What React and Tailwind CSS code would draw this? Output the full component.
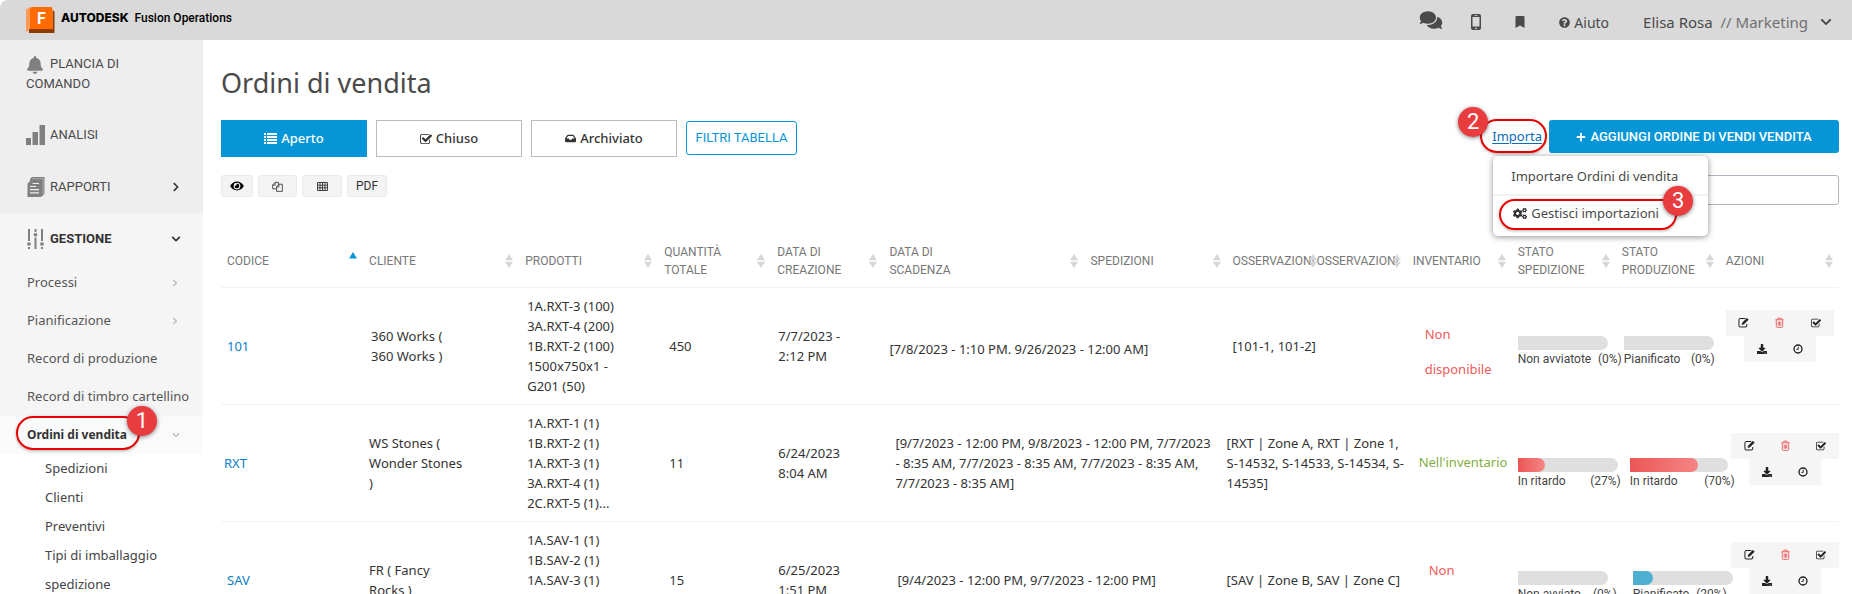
import React from "react";
import {
  FaComments,
  FaBookmark,
  FaQuestionCircle,
  FaBell,
  FaInbox,
  FaEye,
  FaPlus,
  FaCogs,
  FaDownload,
  FaChevronDown,
  FaChevronRight,
} from "react-icons/fa";

/* ---------- Icons ---------- */

const CHECK_PATH =
  "M1408 930v318q0 119-84.5 203.5t-203.5 84.5h-832q-119 0-203.5-84.5t-84.5-203.5v-832q0-119 84.5-203.5t203.5-84.5h832q63 0 117 25 15 7 18 23 3 17-9 29l-49 49q-10 10-23 10-3 0-9-2-23-6-45-6h-832q-66 0-113 47t-47 113v832q0 66 47 113t113 47h832q66 0 113-47t47-113v-254q0-13 9-22l64-64q10-10 23-10 6 0 12 3 20 8 20 29zm231-489l-814 814q-24 24-57 24t-57-24l-430-430q-24-24-24-57t24-57l110-110q24-24 57-24t57 24l263 263 647-647q24-24 57-24t57 24l110 110q24 24 24 57t-24 57z";

function CheckIcon({ className }) {
  return (
    <svg viewBox="0 0 1664 1664" fill="currentColor" className={className} aria-hidden="true">
      <path d={CHECK_PATH} />
    </svg>
  );
}

function EditIcon({ className }) {
  return (
    <svg viewBox="0 0 12 12" fill="none" stroke="currentColor" className={className} aria-hidden="true">
      <path d="M8 1.7H2.6A1.6 1.6 0 0 0 1 3.300V9.200a1.600 1.600 0 0 0 1.600 1.600H8A1.600 1.600 0 0 0 9.600 9.200V7.600" strokeWidth="1.100" />
      <path d="M9.700 1.200l1.700 1.700-5 5-2.200.5.5-2.200z" fill="currentColor" strokeWidth=".3" />
    </svg>
  );
}

function TrashIcon({ className }) {
  return (
    <svg viewBox="0 0 12 12" fill="none" stroke="currentColor" className={className} aria-hidden="true">
      <path d="M1.500 3h9M4.200 3V1.200h3.600V3M2.500 3v7.300c0 .6.4 1.100 1 1.100h5c.6 0 1-.5 1-1.100V3M4.600 5v4.500M6 5v4.500M7.400 5v4.500" strokeWidth=".9" />
    </svg>
  );
}

function ClockIcon({ className }) {
  return (
    <svg viewBox="0 0 12 12" fill="none" stroke="currentColor" className={className} aria-hidden="true">
      <circle cx="6" cy="6" r="4.800" strokeWidth="1.600" />
      <path d="M6.300 3.200V6.500H4" strokeWidth="1.100" />
    </svg>
  );
}

function ListIcon({ className }) {
  return (
    <svg viewBox="0 0 13 11" fill="currentColor" className={className} aria-hidden="true">
      <path d="M0 0h2v2H0zM3 0h10v2H3zM0 3h2v2H0zM3 3h10v2H3zM0 6h2v2H0zM3 6h10v2H3zM0 9h2v2H0zM3 9h10v2H3z" />
    </svg>
  );
}

function CopyIcon({ className }) {
  return (
    <svg viewBox="0 0 12 12" fill="none" stroke="currentColor" className={className} aria-hidden="true">
      <path d="M4.500 8.500H.7V4.300L3.500 1.500H7v2M3.500 1.500v3H.7M5 6l2.500-2.500h3.800v7.800H5zM7.500 3.500v3H5" strokeWidth=".9" />
    </svg>
  );
}

function GridIcon({ className }) {
  return (
    <svg viewBox="0 0 11 9" fill="none" stroke="currentColor" className={className} aria-hidden="true">
      <path d="M.5.5h10v8H.5zM.5 3.200h10M.5 5.800h10M3 .5v8M5.500.5v8M8 .5v8" strokeWidth=".9" />
    </svg>
  );
}

function MobileIcon({ className }) {
  return (
    <svg viewBox="0 0 10 16" className={className} aria-hidden="true">
      <path fill="currentColor" fillRule="evenodd" d="M2 0h6a2 2 0 0 1 2 2v12a2 2 0 0 1-2 2H2a2 2 0 0 1-2-2V2a2 2 0 0 1 2-2zM1.500 3v9.500h7V3zM5 13.400a.9.9 0 1 0 0 1.800.9.9 0 0 0 0-1.800zM3.500 1.200v.7h3v-.7z" />
    </svg>
  );
}

function BarsIcon({ className }) {
  return (
    <svg viewBox="0 0 19 20" fill="currentColor" className={className} aria-hidden="true">
      <path d="M0 13h5v7H0zM6.500 7h5.500v13H6.500zM13.500 0H19v20h-5.500z" />
    </svg>
  );
}

function ReportIcon({ className }) {
  return (
    <svg viewBox="0 0 18 20" className={className} aria-hidden="true">
      <path fill="currentColor" d="M5 0h12.500v17.500H16V19h-1.500v1H.500V6.500L3 4V2z" />
      <path stroke="#eee" strokeWidth=".4" fill="none" d="M16.200 17.500V1.700H5" />
      <path stroke="#eee" strokeWidth="1.200" fill="none" d="M3 9.500h6M3 12.700h9M3 15.900h9M5.500 6.500h6.500" />
    </svg>
  );
}

function SlidersIcon({ className }) {
  return (
    <svg viewBox="0 0 17 20" fill="none" stroke="currentColor" className={className} aria-hidden="true">
      <path strokeWidth="2" d="M2 0v12M2 18v2M8.500 0v3M8.500 8.500V20M15 0v12M15 18v2" />
      <path strokeWidth="3" d="M.3 15h3.400M6.800 5.700h3.400M13.300 15h3.400" />
    </svg>
  );
}

function Logo() {
  return (
    <svg viewBox="0 0 29 26" className="h-[26px] w-[29px] shrink-0" aria-hidden="true">
      <path d="M0 2.500L4 0v22.500L0 25z" fill="#ff9a55" />
      <path d="M3 22h23.500V3l2 1.500V26H3z" fill="#8f3a00" />
      <path d="M4 2a2 2 0 0 1 2-2h18.500a2 2 0 0 1 2 2v20H4z" fill="#ff6b00" />
      <text x="11" y="16.500" fill="#fff" fontSize="16" fontWeight="700" fontFamily="Roboto, sans-serif">F</text>
    </svg>
  );
}

function SortIcon({ active, tight }) {
  if (active) {
    return (
      <svg viewBox="0 0 8 14" className="h-[14px] w-2 shrink-0 self-start" aria-hidden="true">
        <path d="M4 0l4 6.500H0z" fill="#0696d7" />
      </svg>
    );
  }
  return (
    <svg viewBox="0 0 8 14" className={"h-[14px] w-2 shrink-0 " + (tight ? "-ml-1.5" : "")} aria-hidden="true">
      <path d="M4 0l4 6.200H0zM4 14L0 7.800h8z" fill="#d6d6d6" />
    </svg>
  );
}

function Badge({ n, className }) {
  return (
    <span
      className={
        "absolute flex size-[30px] items-center justify-center rounded-full bg-[#e93c3f] font-[Roboto,sans-serif] text-[22px] leading-none text-white shadow-[0_1px_4px_rgba(0,0,0,0.5)] " +
        className
      }
    >
      {n}
    </span>
  );
}

/* ---------- Top bar ---------- */

function TopBar() {
  return (
    <header className="flex h-10 shrink-0 items-center rounded-tl-lg bg-[#d9d9d9] pr-5 pl-[26px] text-[#4a4a4a]">
      <Logo />
      <p className="ml-1.5 pb-1 font-[Roboto,sans-serif] text-[12px] text-black">
        <span className="font-[Inter,sans-serif] font-extrabold">AUTODESK</span>
        <span className="ml-1.5 font-medium">Fusion Operations</span>
      </p>
      <nav className="ml-auto flex items-center pt-1">
        <button type="button" aria-label="Messaggi" className="mr-7 pb-1">
          <FaComments className="h-5 w-6" />
        </button>
        <button type="button" aria-label="Dispositivo mobile" className="mr-[34px]">
          <MobileIcon className="h-4 w-[10px]" />
        </button>
        <button type="button" aria-label="Segnalibri" className="mr-[34px]">
          <FaBookmark className="h-3 w-[10px]" />
        </button>
        <a href="#aiuto" className="mr-[34px] flex items-center gap-1 text-[14px]">
          <FaQuestionCircle className="size-[11px]" />
          Aiuto
        </a>
        <button type="button" className="flex items-center gap-3 text-[15px]">
          <span>
            Elisa Rosa&nbsp; <span className="text-[#707070]">// Marketing</span>
          </span>
          <FaChevronDown className="size-3" />
        </button>
      </nav>
    </header>
  );
}

/* ---------- Sidebar ---------- */

function SideLink({ children, icon }) {
  return (
    <a href="#voce" className="flex h-[38px] items-center justify-between pr-6 pl-[27px] text-[13px] whitespace-nowrap text-[#555]">
      {children}
      {icon && <FaChevronRight className="size-2 text-[#b5b5b5]" />}
    </a>
  );
}

function Sidebar() {
  return (
    <aside className="w-[203px] shrink-0 text-[#4a4a4a]">
      <div className="h-[173px] bg-[#eee] pt-[14px] font-[Roboto,sans-serif] text-[13px]">
        <a href="#plancia" className="block pr-16 pl-[26px] leading-5">
          <FaBell className="mr-1.5 inline h-[18px] w-[18px] text-[#808080]" />
          PLANCIA DI COMANDO
        </a>
        <a href="#analisi" className="mt-[27px] flex items-center gap-[5px] pt-1 pl-[26px]">
          <BarsIcon className="h-5 w-[19px] text-[#808080]" />
          ANALISI
        </a>
        <a href="#rapporti" className="mt-8 flex items-center gap-[5px] pr-[22px] pl-[27px]">
          <ReportIcon className="h-5 w-[18px] text-[#808080]" />
          RAPPORTI
          <FaChevronRight className="ml-auto size-[10px] text-[#333]" />
        </a>
      </div>
      <div className="bg-[#f5f5f5]">
        <a href="#gestione" className="flex h-[51px] items-center gap-1.5 pr-[22px] pl-[27px] font-[Roboto,sans-serif] text-[13px] font-bold text-[#333]">
          <SlidersIcon className="h-5 w-[17px] text-[#808080]" />
          GESTIONE
          <FaChevronDown className="ml-auto size-[10px]" />
        </a>
        <SideLink icon>Processi</SideLink>
        <SideLink icon>Pianificazione</SideLink>
        <SideLink>Record di produzione</SideLink>
        <SideLink>Record di timbro cartellino</SideLink>
      </div>
      <div className="relative bg-[#fafafa]">
        <a href="#ordini" className="flex h-[38px] items-center justify-between pr-[23px] pl-[27px] text-[12px] font-bold text-[#333]">
          Ordini di vendita
          <FaChevronDown className="size-2 text-[#b5b5b5]" />
        </a>
        <span className="absolute top-0 left-4 h-[34px] w-[124px] rounded-full border-2 border-[#e80000] shadow-[0_1px_3px_rgba(0,0,0,0.3)]" />
        <Badge n="1" className="-top-2.5 left-[127px]" />
      </div>
      <ul className="pl-[45px] text-[13px] leading-[29px] text-[#444]">
        <li><a href="#spedizioni">Spedizioni</a></li>
        <li><a href="#clienti">Clienti</a></li>
        <li><a href="#preventivi">Preventivi</a></li>
        <li><a href="#imballaggio">Tipi di imballaggio<br />spedizione</a></li>
      </ul>
    </aside>
  );
}

/* ---------- Toolbar ---------- */

const TAB = "flex h-[37px] w-[146px] items-center justify-center gap-1 border text-[13px] font-medium";
const TOOL = "flex h-[22px] items-center justify-center rounded-[3px] border border-[#eaeaea] bg-[#f3f3f3] font-[Roboto,sans-serif] text-[12px] text-[#333]";

function Toolbar() {
  return (
    <div className="flex items-start justify-between">
      <div>
        <div className="flex gap-[9px]">
          <button type="button" className={TAB + " border-[#0696d7] bg-[#0696d7] text-white"}>
            <ListIcon className="h-[11px] w-[13px]" />
            Aperto
          </button>
          <button type="button" className={TAB + " border-[#bbb] text-[#333]"}>
            <CheckIcon className="size-3" />
            Chiuso
          </button>
          <button type="button" className={TAB + " border-[#bbb] text-[#333]"}>
            <FaInbox className="size-[11px]" />
            Archiviato
          </button>
          <button type="button" className="mt-px h-[34px] w-[111px] rounded-[3px] border border-[#0696d7] font-[Roboto,sans-serif] text-[13px] text-[#0696d7]">
            FILTRI TABELLA
          </button>
        </div>
        <div className="mt-[18px] flex gap-[5px]">
          <button type="button" aria-label="Mostra colonne" className={TOOL + " w-8"}>
            <FaEye className="h-3 w-[14px] text-black" />
          </button>
          <button type="button" aria-label="Copia" className={TOOL + " w-[39px]"}>
            <CopyIcon className="size-[11px]" />
          </button>
          <button type="button" aria-label="Esporta tabella" className={TOOL + " w-10"}>
            <GridIcon className="h-[9px] w-[11px]" />
          </button>
          <button type="button" className={TOOL + " w-10"}>PDF</button>
        </div>
      </div>
      <div>
        <div className="flex items-center justify-end">
          <div className="relative mr-[7px] pb-1">
            <a href="#importa" className="text-[13px] text-[#0b6cb5] underline underline-offset-2">Importa</a>
            <span className="absolute -top-1 -left-3 h-[34px] w-[67px] rounded-full border-2 border-[#e80000] shadow-[0_1px_3px_rgba(0,0,0,0.3)]" />
            <Badge n="2" className="-top-4 -left-[34px]" />
            <div className="absolute top-[33px] left-px z-10 w-[215px] rounded-[5px] bg-white text-[13px] whitespace-nowrap text-[#4a4a4a] shadow-[0_1px_6px_rgba(0,0,0,0.45)]">
              <a href="#importare" className="flex h-10 items-center border-b-2 border-[#f3f3f3] pt-1 pl-[18px]">
                Importare Ordini di vendita
              </a>
              <a href="#gestisci" className="flex h-10 items-center gap-1 pb-1 pl-5">
                <FaCogs className="h-[13px] w-[14px] text-[#333]" />
                Gestisci importazioni
              </a>
              <span className="absolute top-[43px] left-1.5 h-[31px] w-[178px] rounded-full border-2 border-[#e80000] shadow-[0_1px_3px_rgba(0,0,0,0.3)]" />
              <Badge n="3" className="top-[30px] left-[170px]" />
            </div>
          </div>
          <button type="button" className="flex h-[33px] w-[290px] items-center justify-center gap-1 rounded-[3px] bg-[#0696d7] font-[Roboto,sans-serif] text-[13px] font-medium text-white">
            <FaPlus className="size-[10px]" />
            AGGIUNGI ORDINE DI VENDI VENDITA
          </button>
        </div>
        <div className="mt-[22px] flex justify-end">
          <input type="search" aria-label="Cerca" className="h-[30px] w-60 rounded-[3px] border border-[#b4b4c0] bg-white px-2 text-[13px]" />
        </div>
      </div>
    </div>
  );
}

/* ---------- Table ---------- */

const COLUMNS = [
  { label: ["CODICE"], width: 142, active: true },
  { label: ["CLIENTE"], width: 156 },
  { label: ["PRODOTTI"], width: 139 },
  { label: ["QUANTITÀ", "TOTALE"], width: 113 },
  { label: ["DATA DI", "CREAZIONE"], width: 112 },
  { label: ["DATA DI", "SCADENZA"], width: 201 },
  { label: ["SPEDIZIONI"], width: 142 },
  { label: ["OSSERVAZIONI"], width: 87, tight: true, pad: "pl-1.5" },
  { label: ["OSSERVAZIONI"], width: 93, tight: true, pad: "pl-[3px] pr-1.5" },
  { label: ["INVENTARIO"], width: 105 },
  { label: ["STATO", "SPEDIZIONE"], width: 104 },
  { label: ["STATO", "PRODUZIONE"], width: 104 },
  { label: ["AZIONI"], width: 119 },
];
const TOTAL = COLUMNS.reduce((sum, c) => sum + c.width, 0);

const ROWS = [
  {
    code: "101",
    codePad: "pl-1.5",
    client: ["360 Works (", "360 Works )"],
    clientPad: "pl-2",
    products: ["1A.RXT-3 (100)", "3A.RXT-4 (200)", "1B.RXT-2 (100)", "1500x750x1 -", "G201 (50)"],
    qty: "450",
    created: ["7/7/2023 -", "2:12 PM"],
    due: ["[7/8/2023 - 1:10 PM. 9/26/2023 - 12:00 AM]"],
    duePad: "pl-1.5 pt-1.5",
    notes: ["[101-1, 101-2]"],
    notesPad: "pl-1.5",
    stock: ["Non", "disponibile"],
    stockClass: "pt-3 pl-[18px] text-[#ee5a5a]",
    ship: { label: "Non avviatote", pct: 0, bar: "w-[90px]", box: "w-[104px]", fill: "" },
    make: { label: "Pianificato", pct: 0, bar: "w-[90px]", box: "w-[91px]", fill: "" },
    barPad: "pt-12",
    makePad: "pl-2",
    actions: "items-start pt-[22px] pl-1.5",
  },
  {
    code: "RXT",
    codePad: "pl-[3px]",
    client: ["WS Stones (", "Wonder Stones", ")"],
    clientPad: "pl-1.5",
    products: ["1A.RXT-1 (1)", "1B.RXT-2 (1)", "1A.RXT-3 (1)", "3A.RXT-4 (1)", "2C.RXT-5 (1)..."],
    qty: "11",
    created: ["6/24/2023", "8:04 AM"],
    due: [
      "[9/7/2023 - 12:00 PM, 9/8/2023 - 12:00 PM, 7/7/2023",
      "- 8:35 AM, 7/7/2023 - 8:35 AM, 7/7/2023 - 8:35 AM,",
      "7/7/2023 - 8:35 AM]",
    ],
    duePad: "pl-3",
    notes: ["[RXT | Zone A, RXT | Zone 1,", "S-14532, S-14533, S-14534, S-", "14535]"],
    notesPad: "pl-0",
    stock: ["Nell'inventario"],
    stockClass: "pl-3 text-[#7fae45]",
    ship: { label: "In ritardo", pct: 27, bar: "w-[100px]", box: "w-[103px]", fill: "bg-linear-to-r from-[#ec5555] to-[#f48585]" },
    make: { label: "In ritardo", pct: 70, bar: "w-[98px]", box: "w-[105px]", fill: "bg-linear-to-r from-[#ec5555] to-[#f48585]" },
    barPad: "pt-[53px]",
    makePad: "pl-3.5",
    actions: "items-end pt-7",
  },
  {
    code: "SAV",
    codePad: "pl-1.5",
    client: ["FR ( Fancy", "Rocks )"],
    clientPad: "pl-1.5",
    products: ["1A.SAV-1 (1)", "1B.SAV-2 (1)", "1A.SAV-3 (1)", "3A.SAV-4 (1)", "2C.SAV-5 (1)..."],
    qty: "15",
    created: ["6/25/2023", "1:51 PM"],
    due: ["[9/4/2023 - 12:00 PM, 9/7/2023 - 12:00 PM]"],
    duePad: "pl-3.5",
    notes: ["[SAV | Zone B, SAV | Zone C]"],
    notesPad: "pl-0",
    stock: ["Non", "disponibile"],
    stockClass: "pt-4 pl-[22px] text-[#ee5a5a]",
    ship: { label: "Non avviato", pct: 0, bar: "w-[90px]", box: "w-[99px]", fill: "" },
    make: { label: "Pianificato", pct: 20, bar: "w-[100px]", box: "w-[94px]", fill: "bg-[#4db0d0]" },
    barPad: "pt-[49px]",
    makePad: "pl-[17px]",
    actions: "items-end pt-5",
  },
];

function Lines({ items }) {
  return items.map((line, i) => (
    <span key={i} className="block whitespace-nowrap">
      {line}
    </span>
  ));
}

function Progress({ label, pct, bar, box, fill }) {
  return (
    <div className="font-[Roboto,sans-serif] text-[12px] leading-[18px] whitespace-nowrap text-[#444]">
      <div className={"h-[14px] overflow-hidden rounded-r-full bg-[#dfdfdf] " + bar}>
        <div className={"h-full rounded-r-full " + fill} style={{ width: pct + "%" }} />
      </div>
      <div className={"flex justify-between " + box}>
        <span>{label}</span>
        <span>({pct}%)</span>
      </div>
    </div>
  );
}

function Actions({ className }) {
  const cell = "flex h-[26px] w-9 items-center justify-center bg-[#f5f5f5] text-[#222]";
  return (
    <div className={"flex flex-col " + className}>
      <div className="w-[108px]">
        <div className="flex">
          <button type="button" aria-label="Modifica" className={cell}><EditIcon className="size-[11px]" /></button>
          <button type="button" aria-label="Elimina" className={cell}><TrashIcon className="size-[11px] text-[#ec5050]" /></button>
          <button type="button" aria-label="Completa" className={cell}><CheckIcon className="size-[10px]" /></button>
        </div>
        <div className="flex justify-center">
          <button type="button" aria-label="Scarica" className={cell}><FaDownload className="size-[10px]" /></button>
          <button type="button" aria-label="Cronologia" className={cell}><ClockIcon className="size-[10px]" /></button>
        </div>
      </div>
    </div>
  );
}

function Orders() {
  return (
    <table className="w-full table-fixed border-collapse text-[13px] leading-5 text-[#333]">
      <colgroup>
        {COLUMNS.map((c, i) => (
          <col key={i} style={{ width: (c.width / TOTAL) * 100 + "%" }} />
        ))}
      </colgroup>
      <thead className="font-[Roboto,sans-serif] text-[12px] leading-[18px] text-[#777]">
        <tr className="h-[50px] border-b border-[#f3f3f3]">
          {COLUMNS.map((c, i) => (
            <th key={i} scope="col" className={"pb-0.5 text-left font-normal " + (c.pad || "px-1.5")}>
              <span className="flex items-center justify-between">
                <span><Lines items={c.label} /></span>
                <SortIcon active={c.active} tight={c.tight} />
              </span>
            </th>
          ))}
        </tr>
      </thead>
      <tbody>
        {ROWS.map((r) => (
          <tr key={r.code} className="border-b border-[#f3f3f3]">
            <td className={r.codePad}>
              <a href="#ordine" className="text-[#0c7fc4]">{r.code}</a>
            </td>
            <td className={r.clientPad}><Lines items={r.client} /></td>
            <td className="py-2 pl-2"><Lines items={r.products} /></td>
            <td className="pl-[11px]">{r.qty}</td>
            <td className="pl-[7px]"><Lines items={r.created} /></td>
            <td colSpan={2} className={r.duePad}><Lines items={r.due} /></td>
            <td colSpan={2} className={r.notesPad}><Lines items={r.notes} /></td>
            <td className={"leading-[35px] " + r.stockClass}><Lines items={r.stock} /></td>
            <td className={"pl-1.5 align-top " + r.barPad}><Progress {...r.ship} /></td>
            <td className={"align-top " + r.barPad + " " + r.makePad}><Progress {...r.make} /></td>
            <td className="p-0 align-top"><Actions className={r.actions} /></td>
          </tr>
        ))}
      </tbody>
    </table>
  );
}

export default function App() {
  return (
    <div className="flex h-screen flex-col overflow-hidden bg-white font-['Noto_Sans',sans-serif]">
      <TopBar />
      <div className="flex min-h-0 flex-1">
        <Sidebar />
        <main className="min-w-0 flex-1 pr-[13px] pl-[18px]">
          <h1 className="pt-[25px] pb-[19px] text-[27px] leading-9 text-[#4a4a4a]">Ordini di vendita</h1>
          <Toolbar />
          <div className="mt-8">
            <Orders />
          </div>
        </main>
      </div>
    </div>
  );
}
